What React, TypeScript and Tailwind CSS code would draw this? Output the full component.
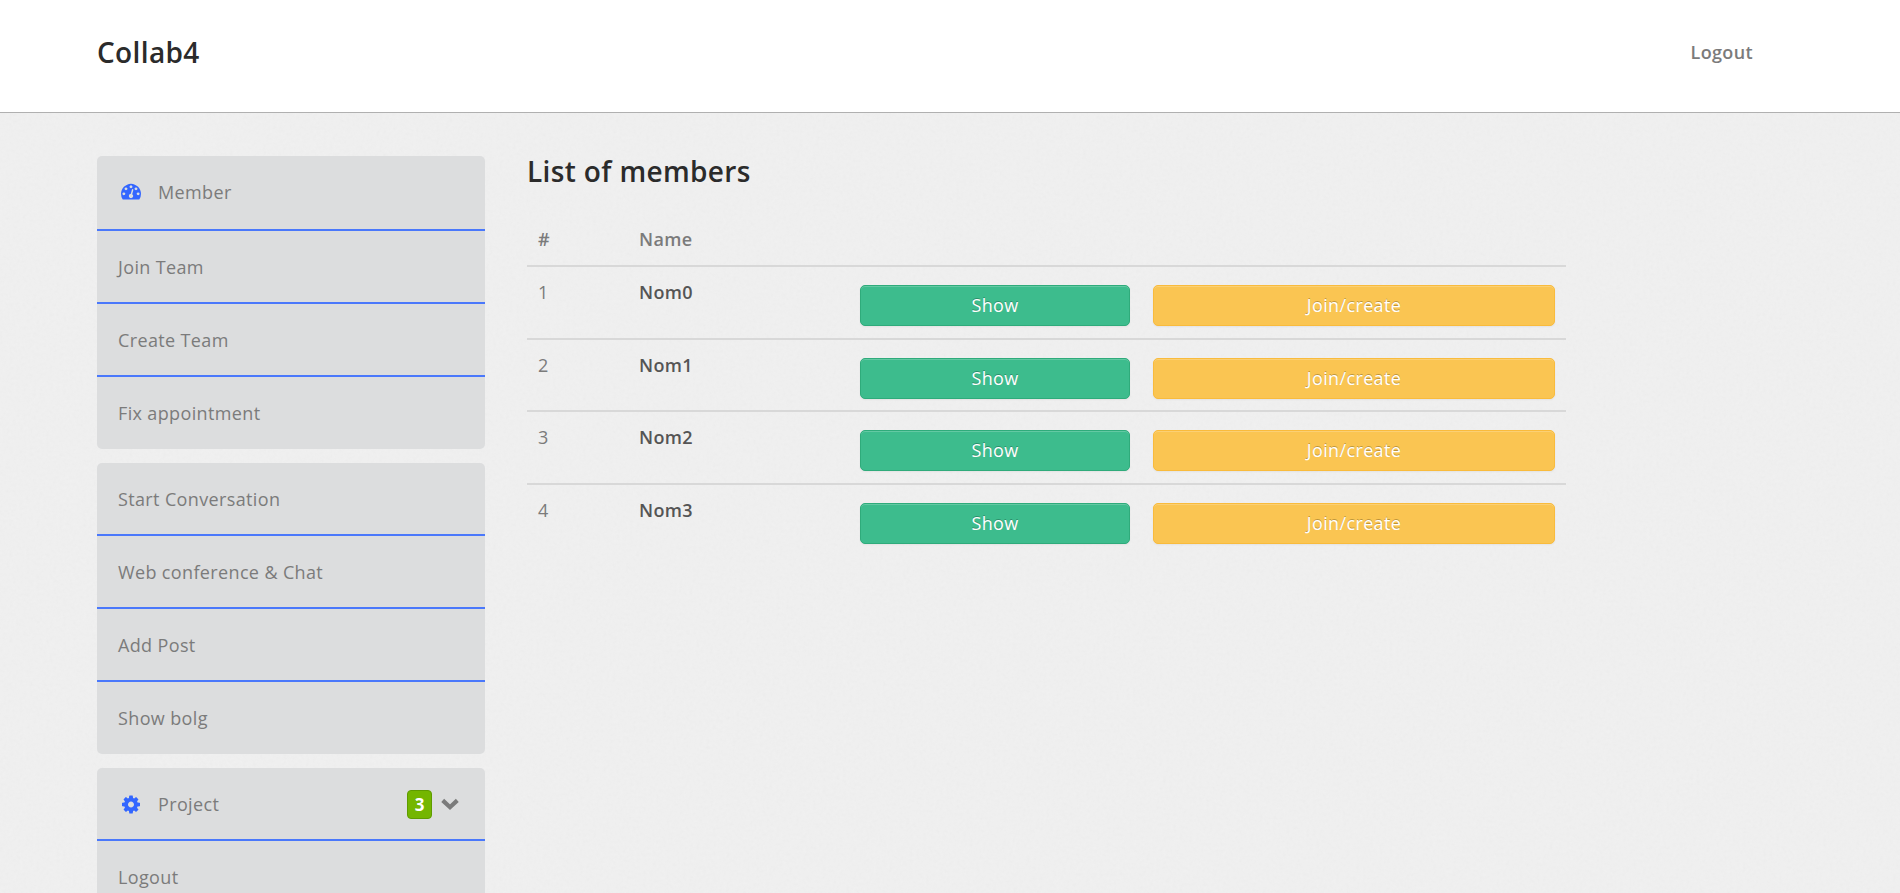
import React from "react";

type Item = { label: string; icon?: React.ReactNode; badge?: string };

const sections: Item[][] = [
  [
    { label: "Member", icon: <GaugeIcon /> },
    { label: "Join Team" },
    { label: "Create Team" },
    { label: "Fix appointment" },
  ],
  [
    { label: "Start Conversation" },
    { label: "Web conference & Chat" },
    { label: "Add Post" },
    { label: "Show bolg" },
  ],
  [{ label: "Project", icon: <GearIcon />, badge: "3" }, { label: "Logout" }],
];

const members = ["Nom0", "Nom1", "Nom2", "Nom3"];

/* Dashboard dial, drawn on a 1792-unit grid with y pointing down. */
function GaugeIcon() {
  return (
    <svg viewBox="0 0 1792 1792" className="mb-[3px] size-[20px]" fill="currentColor" aria-hidden="true">
      <path d="M384 1152q0-53-37.500-90.500t-90.500-37.500-90.500 37.500-37.500 90.500 37.500 90.500 90.500 37.500 90.500-37.500 37.500-90.500zm192-448q0-53-37.500-90.500t-90.500-37.500-90.500 37.500-37.500 90.500 37.500 90.500 90.500 37.500 90.500-37.500 37.500-90.500zm428 481l101-382q6-26-7.500-48.500t-38.500-29.500-48 6.500-30 39.500l-101 382q-60 5-107 43.500t-63 98.500q-20 77 20 146t117 89 146-20 89-117q16-60-6-117t-72-91zm660-33q0-53-37.500-90.500t-90.500-37.500-90.500 37.500-37.500 90.500 37.500 90.500 90.500 37.500 90.500-37.500 37.500-90.500zm-640-640q0-53-37.500-90.500t-90.500-37.500-90.500 37.500-37.500 90.500 37.500 90.500 90.500 37.500 90.500-37.500 37.500-90.500zm448 192q0-53-37.500-90.500t-90.500-37.500-90.500 37.500-37.500 90.500 37.500 90.500 90.500 37.500 90.500-37.500 37.500-90.500zm320 448q0 261-141 483-19 29-54 29h-1402q-35 0-54-29-141-221-141-483 0-182 71-348t191-286 286-191 348-71 348 71 286 191 191 286 71 348z" />
    </svg>
  );
}

function GearIcon() {
  return (
    <svg viewBox="0 0 1536 1792" className="h-[21px] w-[18px]" fill="currentColor" aria-hidden="true">
      <path d="M1024 896q0-106-75-181t-181-75-181 75-75 181 75 181 181 75 181-75 75-181zm512-109v222q0 12-8 23t-20 13l-185 28q-19 54-39 91 35 50 107 138 10 12 10 25t-9 23q-27 37-99 108t-94 71q-12 0-26-9l-138-108q-44 23-91 38-16 136-29 186-7 28-36 28h-222q-14 0-24.500-8.500t-11.500-21.500l-28-184q-49-16-90-37l-141 107q-10 9-25 9-14 0-25-11-126-114-165-168-7-10-7-23 0-12 8-23 15-21 51-66.500t54-70.500q-27-50-41-99l-183-27q-13-2-21-12.500t-8-23.500v-222q0-12 8-23t19-13l186-28q14-46 39-92-40-57-107-138-10-12-10-24 0-10 9-23 26-36 98.500-107.500t94.500-71.500q13 0 26 10l138 107q44-23 91-38 16-136 29-186 7-28 36-28h222q14 0 24.500 8.500t11.500 21.500l28 184q49 16 90 37l142-107q9-9 24-9 13 0 25 10 129 119 165 170 7 8 7 22 0 12-8 23-15 21-51 66.500t-54 70.500q26 50 41 98l183 28q13 2 21 12.500t8 23.500z" />
    </svg>
  );
}

function ChevronIcon() {
  return (
    <svg viewBox="0 0 18 13" className="h-[13px] w-[18px]" fill="none" stroke="currentColor" strokeWidth="4.200" aria-hidden="true">
      <path d="M1.700 2.400 9 9.200 16.300 2.400" />
    </svg>
  );
}

export default function App() {
  return (
    <div className="relative isolate h-[893px] overflow-hidden bg-[#f0f0f0] font-['Open_Sans',sans-serif] text-[18px] leading-[27px] tracking-[0.36px] text-[#7b7b7b]">
      <svg className="pointer-events-none absolute inset-0 -z-10 size-full opacity-[0.045]" aria-hidden="true">
        <filter id="grain">
          <feTurbulence type="fractalNoise" baseFrequency="0.3" numOctaves="2" seed="4" />
          <feColorMatrix type="saturate" values="0" />
        </filter>
        <rect width="100%" height="100%" filter="url(#grain)" />
      </svg>

      <header className="flex h-[113px] items-center justify-between border-b border-[#b0b0b0] bg-white pr-[147px] pb-[7px] pl-[97px]">
        <h1 className="text-[28px] font-semibold text-[#2b2b2b]">Collab4</h1>
        <a className="font-semibold">Logout</a>
      </header>

      <div className="flex items-start gap-[42px] pt-[43px] pl-[97px]">
        <nav className="flex w-[388px] flex-col gap-[14px]">
          {sections.map((items, s) => (
            <ul key={s} className="overflow-hidden rounded-[5px] bg-[#dcddde]">
              {items.map((item, i) => (
                <li
                  key={item.label}
                  className={`flex items-center border-b-2 border-[#4a78fb] pl-[21px] last:border-b-0 ${
                    s === 0 && i === 0 ? "h-[75px]" : "h-[73px] pt-[2px] last:h-[72px] last:pt-0"
                  }`}
                >
                  {item.icon && <span className="mr-[14px] flex w-[26px] justify-center text-[#3366ff]">{item.icon}</span>}
                  <span>{item.label}</span>
                  {item.badge && (
                    <span className="mr-[26px] ml-auto flex items-center gap-[9px]">
                      <span className="flex h-[29px] w-[25px] items-center justify-center rounded-[4px] border border-[#5f9c00] bg-[#74b600] text-[17px] font-bold tracking-normal text-white">
                        {item.badge}
                      </span>
                      <ChevronIcon />
                    </span>
                  )}
                </li>
              ))}
            </ul>
          ))}
        </nav>

        <main className="w-[1039px]">
          <h2 className="-mt-px text-[28px] leading-[32px] font-semibold text-[#2b2b2b]">List of members</h2>
          <table className="mt-[32px] w-full table-fixed border-separate border-spacing-0 [&_td]:border-b-2 [&_td]:border-[#d8d8d8] [&_th]:border-b-2 [&_th]:border-[#d8d8d8] [&_tr:last-child_td]:border-b-0">
            <colgroup>
              <col className="w-[101px]" />
              <col className="w-[221px]" />
              <col className="w-[292px]" />
              <col />
            </colgroup>
            <thead>
              <tr className="h-[48px] text-left align-top">
                <th className="px-[11px] pt-[7px] font-semibold">#</th>
                <th className="px-[11px] pt-[7px] font-semibold">Name</th>
                <th />
                <th />
              </tr>
            </thead>
            <tbody>
              {members.map((name, i) => (
                <tr key={name} className="h-[73px] align-top even:h-[72px]">
                  <td className="px-[11px] pt-[12px]">{i + 1}</td>
                  <td className="px-[11px] pt-[12px] font-semibold text-[#555555]">{name}</td>
                  <td className="px-[11px] pt-[18px]">
                    <button className="block h-[41px] w-full rounded-[5px] border border-[#2fab7b] bg-[#3dbc8d] text-white shadow-[inset_0_1px_0_rgba(255,255,255,0.2),0_1px_2px_rgba(0,0,0,0.05)] [text-shadow:0_-1px_0_rgba(0,0,0,0.25)]">
                      Show
                    </button>
                  </td>
                  <td className="pt-[18px] pr-[11px] pl-[12px]">
                    <button className="block h-[41px] w-full rounded-[5px] border border-[#f9bb3c] bg-[#fac552] text-white shadow-[inset_0_1px_0_rgba(255,255,255,0.2),0_1px_2px_rgba(0,0,0,0.05)] [text-shadow:0_-1px_0_rgba(0,0,0,0.25)]">
                      Join/create
                    </button>
                  </td>
                </tr>
              ))}
            </tbody>
          </table>
        </main>
      </div>
    </div>
  );
}
